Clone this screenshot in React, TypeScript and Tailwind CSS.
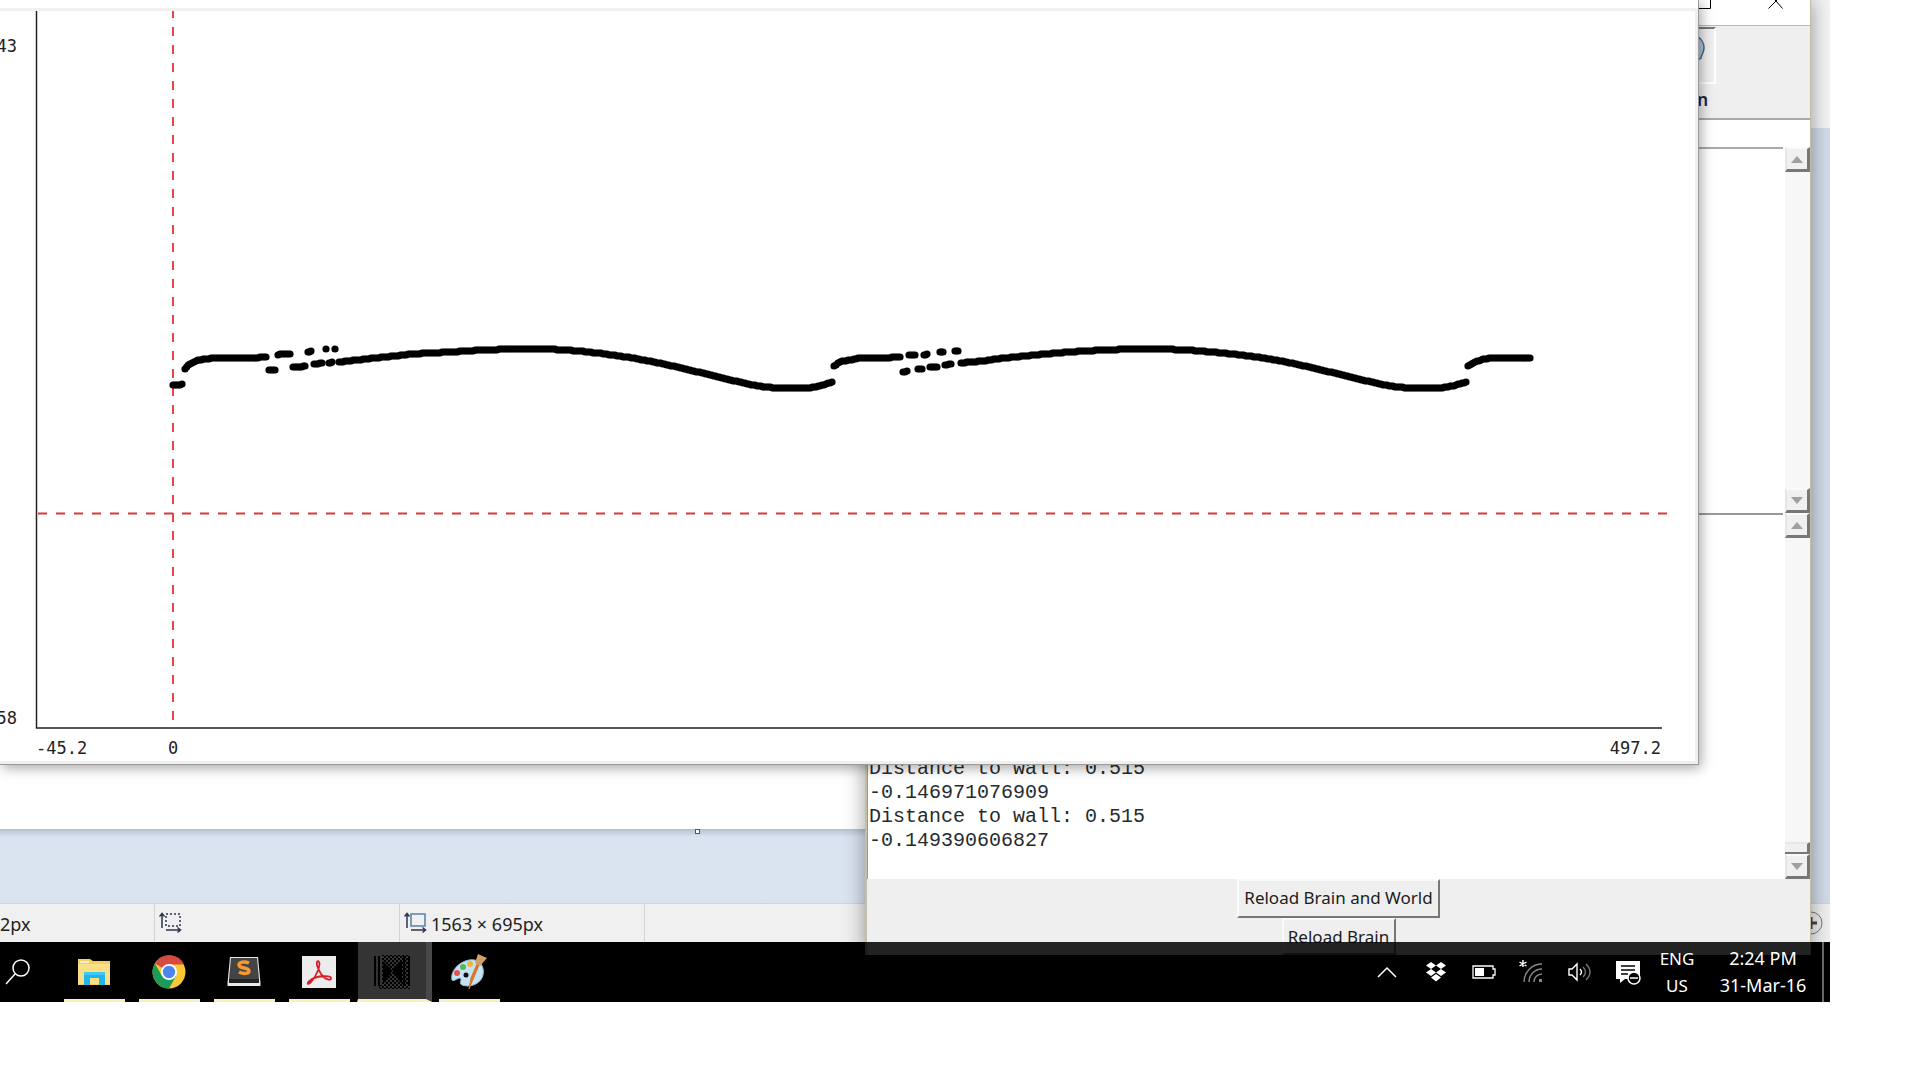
import React from "react";

type Point = [number, number];

const wave: Point[] = [
  [339, 362], [357, 360], [385, 357], [414, 354], [450, 352], [485, 350], [525, 349], [565, 350], [605, 354],
  [649, 361], [698, 372], [735, 381], [759, 386], [780, 388], [805, 388], [820, 386], [832, 382],
];
const secondWave: Point[] = [
  [961, 363], [982, 361], [1005, 358], [1035, 355], [1070, 352], [1105, 350], [1145, 349], [1185, 350], [1232, 354],
  [1281, 361], [1330, 372], [1367, 381], [1391, 386], [1412, 388], [1437, 388], [1452, 386], [1466, 382],
];

const series: Point[][] = [
  [[173, 385], [180, 385], [182, 384]],
  [[185, 369], [190, 364], [196, 361], [205, 359], [217, 358], [258, 358], [260, 357], [266, 357]],
  [[269, 370], [275, 370]],
  [[278, 355], [282, 354], [290, 354]],
  [[293, 367], [300, 367], [305, 366]],
  [[308, 352], [311, 351]],
  [[314, 364], [322, 363]],
  [[329, 363], [332, 362]],
  [[326, 349]],
  [[335, 349]],
  wave,
  [[834, 366], [840, 362], [850, 360], [862, 358], [890, 358], [892, 357], [900, 357]],
  [[909, 355], [915, 355]],
  [[924, 355], [927, 354]],
  [[940, 352], [943, 352]],
  [[955, 351], [958, 351]],
  [[903, 372], [907, 371]],
  [[918, 369], [922, 369]],
  [[930, 367], [937, 367]],
  [[945, 365], [951, 364]],
  secondWave,
  [[1468, 366], [1475, 362], [1485, 359], [1495, 358], [1530, 358]],
];

function sample(points: Point[]): Point[] {
  const out: Point[] = [points[0]];
  for (let i = 1; i < points.length; i++) {
    const [x0, y0] = points[i - 1];
    const [x1, y1] = points[i];
    const before = points[i - 2] ?? points[i - 1];
    const after = points[i + 1] ?? points[i];
    const m0 = ((y1 - before[1]) / (x1 - before[0])) * (x1 - x0);
    const m1 = ((after[1] - y0) / (after[0] - x0)) * (x1 - x0);
    const n = Math.max(1, Math.ceil((x1 - x0) / 2));
    for (let k = 1; k <= n; k++) {
      const t = k / n;
      const t2 = t * t;
      const t3 = t2 * t;
      const y = (2 * t3 - 3 * t2 + 1) * y0 + (t3 - 2 * t2 + t) * m0 + (3 * t2 - 2 * t3) * y1 + (t3 - t2) * m1;
      out.push([x0 + (x1 - x0) * t, y]);
    }
  }
  return out;
}

const dots = series.flatMap(sample);

function Plot() {
  return (
    <svg viewBox="35 11 1660 719" preserveAspectRatio="xMinYMin meet" className="block w-full" role="img" aria-label="Distance plot">
      <path d="M36.5 11V728H1662" fill="none" stroke="#222" strokeWidth="1.5" />
      <path d="M173 9V724" stroke="#ea3034" strokeWidth="1.8" strokeDasharray="9 9" />
      <path d="M38 513.500H1667" stroke="#d8383e" strokeWidth="1.8" strokeDasharray="9 9" />
      {dots.map(([x, y], i) => (
        <circle key={i} cx={x} cy={Math.round(y)} r="3.6" />
      ))}
    </svg>
  );
}

function PlotWindow() {
  return (
    <section className="absolute top-0 right-[131px] bottom-[237px] left-0 flex flex-col border-r border-b border-[#999] bg-white shadow-[2px_3px_12px_rgba(0,0,0,0.35)]">
      <div className="h-2 shrink-0 bg-white" />
      <div className="flex flex-1 flex-col overflow-hidden border-t-3 border-r-3 border-b-3 border-[#f0f0f0] font-['DejaVu_Sans_Mono',monospace] text-[17px] leading-5 text-[#222]">
        <div className="flex">
          <div className="flex w-[35px] shrink-0 flex-col justify-between pt-[25px] pr-[18px] pb-0.5">
            <span className="self-end">43</span>
            <span className="self-end">58</span>
          </div>
          <div className="min-w-0 flex-1"><Plot /></div>
        </div>
        <div className="flex pt-2 pr-[34px] pl-9">
          <span className="w-[132px]">-45.2</span>
          <span>0</span>
          <span className="ml-auto">497.2</span>
        </div>
      </div>
    </section>
  );
}

function ArrowButton({ down = false }: { down?: boolean }) {
  return (
    <button aria-label={down ? "Scroll down" : "Scroll up"} className="flex h-[25px] w-full shrink-0 items-center justify-center border-t-2 border-r-3 border-b-3 border-l-2 border-t-[#fafafa] border-r-[#777] border-b-[#777] border-l-[#e6e6e6] bg-[#f0f0f0]">
      <svg width="12" height="7" viewBox="0 0 12 7">
        <path d={down ? "M0 0H12L6 7Z" : "M0 7H12L6 0Z"} fill="#a0a0a0" />
      </svg>
    </button>
  );
}

function ScrollBar({ thumb = false }: { thumb?: boolean }) {
  return (
    <div className="flex w-[25px] shrink-0 flex-col justify-between bg-[#f7f7f7]">
      <ArrowButton />
      <div>
        {thumb && <div className="h-3 border-t-2 border-r-3 border-b-2 border-[#777] border-t-[#e8e8e8] bg-[#f0f0f0]" />}
        <ArrowButton down />
      </div>
    </div>
  );
}

function ConsoleWindow() {
  return (
    <section className="absolute top-0 right-[19px] bottom-[47px] left-[865px] flex flex-col border-r border-l-2 border-[#c4bfa0] bg-white shadow-[0_0_20px_rgba(0,0,0,0.4)]">
      <div className="flex h-[26px] shrink-0 items-start justify-end gap-[57px] border-b border-[#b8b8b8] pr-[27px]">
        <button aria-label="Maximize"><svg width="15" height="9" viewBox="0 0 15 9"><path d="M.5 0V8.500H14.500V0" fill="none" stroke="#000" /></svg></button>
        <button aria-label="Close"><svg width="15" height="9" viewBox="0 0 15 9"><path d="M.5 8.500L8 1L14.500 8.500M6 -1L8 1L10 -1" fill="none" stroke="#000" /></svg></button>
      </div>
      <div className="flex h-[94px] shrink-0 justify-end border-b-2 border-[#a8a8a8] bg-[#efefef] pt-px pr-[94px]">
        <div className="flex flex-col items-center">
          <button aria-label="Brain" className="flex h-[57px] w-[56px] items-start justify-center border-t-2 border-r-2 border-b-2 border-t-[#777] border-r-white border-b-white bg-[#efefef] pt-[7px]">
            <svg width="36" height="30" viewBox="0 0 36 30">
              <path d="M18 1H29C33 3 35 8 35 12C35 17 32 19 32 22L29 24V29H18Z" fill="#a9c3de" stroke="#556680" strokeWidth="1.500" />
            </svg>
          </button>
          <span className="mt-1 self-end pr-2 font-['Noto_Sans',sans-serif] text-[17px] leading-6 font-semibold text-[#223]">n</span>
        </div>
      </div>
      <div className="h-[27px] shrink-0 bg-white" />
      <div className="flex min-h-0 flex-1">
        <div className="mr-0.5 flex-1 border-t-2 border-[#aaa] bg-white" />
        <ScrollBar />
      </div>
      <div className="flex min-h-0 flex-1">
        <div className="mr-0.5 flex flex-1 flex-col justify-end overflow-hidden border-t-2 border-l border-[#999] bg-white pb-[26px] pl-px">
          <pre className="font-['Liberation_Mono','Courier_New',monospace] text-[20px] leading-6 text-[#2a2a2a]">
            {"Distance to wall: 0.515\n-0.146971076909\nDistance to wall: 0.515\n-0.149390606827"}
          </pre>
        </div>
        <ScrollBar thumb />
      </div>
      <div className="flex h-[76px] shrink-0 flex-col items-center bg-[#efefef] font-['Noto_Sans','Segoe_UI',sans-serif] text-[17px] text-[#1c1c1c]">
        <button className="h-[39px] w-[203px] border-2 border-t-[#fafafa] border-r-[#777] border-b-[#777] border-l-[#fafafa] pb-0.5 whitespace-nowrap">Reload Brain and World</button>
        <button className="h-[37px] w-[114px] border-2 border-t-[#fafafa] border-r-[#777] border-b-[#777] border-l-[#fafafa] whitespace-nowrap">Reload Brain</button>
      </div>
    </section>
  );
}

function SizeIcon({ dashed = false }: { dashed?: boolean }) {
  return (
    <svg width="23" height="23" viewBox="0 0 23 23" fill="none" stroke="#2c3350" strokeWidth="1.500">
      <path d="M3 16V2M0.500 4.500L3 1.500L5.500 4.500M7 18H21M18.500 15.500L21.500 18L18.500 20.500" />
      <rect x="7" y="2" width="14" height="12" strokeDasharray={dashed ? "2 2" : undefined} stroke={dashed ? "#2c3350" : "#5580a5"} />
    </svg>
  );
}

function PaintWindow() {
  return (
    <section className="absolute inset-x-0 top-0 bottom-[60px] flex flex-col bg-[#dae4f0]">
      <div className="h-32 shrink-0 bg-[#f2f3f4]" />
      <div className="relative flex flex-1 flex-col bg-[#d0dae9]">
        <div className="h-[701px] bg-white" />
        <div className="flex-1 bg-linear-to-b from-[#b4c0d2] to-[#dae4f0] to-[8px]" />
        <div className="absolute top-[701px] left-[695px] size-[5px] border border-[#555] bg-white" />
        <div className="absolute inset-y-0 right-0 w-[19px] bg-[#d3dcea]" />
      </div>
      <footer className="flex h-[39px] shrink-0 items-center border-t border-[#d0d4da] bg-[#f0f0f0] font-['Noto_Sans','Segoe_UI',sans-serif] text-[18px] leading-6 text-[#222]">
        <div className="flex h-full w-[155px] items-center border-r border-[#d4d4d4] pt-0.5">2px</div>
        <div className="flex h-full w-[245px] items-center border-r border-[#d4d4d4] pl-1"><SizeIcon dashed /></div>
        <div className="flex h-full w-[245px] items-center gap-1 border-r border-[#d4d4d4] pl-1"><SizeIcon /><span className="pt-0.5">1563 × 695px</span></div>
        <button aria-label="Zoom in" className="mr-[7px] ml-auto">
          <svg width="24" height="24" viewBox="0 0 24 24"><circle cx="12" cy="12" r="11" fill="#eee" stroke="#777" /><path d="M6 12H18M12 6V18" stroke="#444" strokeWidth="3" /></svg>
        </button>
      </footer>
    </section>
  );
}

const Folder = () => (
  <svg width="34" height="34" viewBox="0 0 34 34">
    <path d="M1 4H13L16 6H33V30H1Z" fill="#f5cf63" /><path d="M3 6H12V8H3Z" fill="#fff3c8" /><path d="M1 9H33V29H1Z" fill="#fbdf87" />
    <path d="M7 17H28V30H22V23H13V30H7Z" fill="#22b5ea" /><path d="M7 17H28V20H7Z" fill="#3fc9f5" />
  </svg>
);
const Chrome = () => (
  <svg width="34" height="34" viewBox="0 0 34 34">
    <circle cx="17" cy="17" r="16.500" fill="#fcc934" />
    <path d="M17 17L3 8.500A16.500 16.500 0 0 1 32 9.500H17Z" fill="#d64b3f" />
    <path d="M3 8.500A16.500 16.500 0 0 0 17 33.500L24 21L17 17L10 21Z" fill="#1b9b59" />
    <circle cx="17" cy="17" r="8" fill="#fff" /><circle cx="17" cy="17" r="6.200" fill="#4a86ee" />
  </svg>
);
const Sublime = () => (
  <svg width="34" height="34" viewBox="0 0 34 34">
    <path d="M3 2H31L33.500 28V31H.5V28Z" fill="#e8e8e8" /><path d="M4 3H30L32 24V28H2V24Z" fill="#444" /><path d="M2 24H32V28H2Z" fill="#222" />
    <path d="M22 8C17 6 12 7 12 10C12 14 22 12 22 16C22 19 16 19 12 17" fill="none" stroke="#f59a32" strokeWidth="3.500" />
  </svg>
);
const Acrobat = () => (
  <svg width="34" height="34" viewBox="0 0 34 34">
    <path d="M0 1H34V33H0Z" fill="#ececec" />
    <path d="M16 6C13 7 16 14 19 19C23 25 30 26 29 23C28 20 15 21 10 24C4 28 5 31 9 27C14 22 19 10 17 7Z" fill="none" stroke="#d51f28" strokeWidth="1.800" />
  </svg>
);
const Film = () => (
  <svg width="36" height="36" viewBox="0 0 36 36">
    <defs><pattern id="check" width="4" height="4" patternUnits="userSpaceOnUse"><path d="M0 0H2V2H0ZM2 2H4V4H2Z" fill="#000" /></pattern></defs>
    <path d="M8 1H36V35H5V31H8Z" fill="url(#check)" />
    <path d="M0 2H2V32H0ZM4 2H6V32H4ZM9 7L17 15V19L9 30ZM28 7L19 15V19L28 30ZM29 2H31V32H29ZM34 2H36V32H34Z" fill="#000" />
  </svg>
);
const Palette = () => (
  <svg width="36" height="36" viewBox="0 0 36 36">
    <path d="M18 6C28 4 34 12 32 21C30 30 19 34 11 31C7 29 12 26 9 24C6 24 3 28 1 26C-1 18 7 8 18 6Z" fill="#c5e3f2" stroke="#8dbdd8" />
    <circle cx="15" cy="21" r="2.500" fill="#111" /><circle cx="6" cy="19" r="3" fill="#e0534f" /><circle cx="12" cy="13" r="3" fill="#54b85b" /><circle cx="19" cy="10" r="3" fill="#efb53a" />
    <path d="M28 11L18 35L20 24L26 10Z" fill="#d9762b" stroke="#d9762b" /><path d="M24 9L27 0L36 4L29 12Z" fill="#cfa06c" />
  </svg>
);

const apps = [
  { name: "File Explorer", icon: <Folder /> },
  { name: "Chrome", icon: <Chrome /> },
  { name: "Sublime Text", icon: <Sublime /> },
  { name: "Acrobat Reader", icon: <Acrobat /> },
  { name: "Plot", icon: <Film />, active: true },
  { name: "Paint", icon: <Palette /> },
];

function Tray() {
  return (
    <div className="ml-auto flex h-full items-center pl-2 text-white">
      <button aria-label="Show hidden icons" className="mr-[28px]"><svg width="20" height="12" viewBox="0 0 20 12" fill="none" stroke="#fff" strokeWidth="1.500"><path d="M1 11L10 2L19 11" /></svg></button>
      <button aria-label="Dropbox" className="mr-[25px]"><svg width="22" height="22" viewBox="0 0 22 22" fill="#fff"><path d="M6 1L11 4.500L6 8L1 4.500ZM16 1L21 4.500L16 8L11 4.500ZM6 8L11 11.500L6 15L1 11.500ZM16 8L21 11.500L16 15L11 11.500ZM11 13L16 16.500L11 20.500L6 16.500Z" /></svg></button>
      <button aria-label="Battery" className="mr-[23px]"><svg width="24" height="14" viewBox="0 0 24 14"><path d="M1 1H21V4H23V10H21V13H1Z" fill="none" stroke="#fff" strokeWidth="1.300" /><path d="M3 3H12V11H3Z" fill="#fff" /></svg></button>
      <button aria-label="Network" className="mr-[25px]">
        <svg width="24" height="24" viewBox="0 0 24 24" fill="none" stroke="#888" strokeWidth="1.400">
          <path d="M5 22A18 18 0 0 1 23 4M10 22A13 13 0 0 1 23 9M15 22A8 8 0 0 1 23 14" /><path d="M20 19H23V22H20Z" fill="#888" stroke="none" /><path d="M4 0V7M.5 2L7.500 6M7.500 2L.5 6" stroke="#fff" />
        </svg>
      </button>
      <button aria-label="Volume" className="mr-[24px]"><svg width="24" height="20" viewBox="0 0 24 20" fill="none" stroke="#fff" strokeWidth="1.400"><path d="M1 7H4L9 2V18L4 13H1ZM12 7Q15 10 12 13" /><path d="M15 5Q20 10 15 15M18 2Q26 10 18 18" stroke="#777" /></svg></button>
      <button aria-label="Notifications" className="mr-[18px]"><svg width="25" height="25" viewBox="0 0 25 25"><path d="M0 1H24V19H9L4 23V19H0Z" fill="#fff" /><path d="M5 6H19M5 10H19M5 14H12" stroke="#000" strokeWidth="1.500" /><circle cx="18" cy="18" r="6" fill="#000" stroke="#fff" strokeWidth="1.500" /><path d="M14 18H22" stroke="#fff" strokeWidth="1.500" /></svg></button>
      <button className="mr-[22px] w-9 text-center leading-[27px] whitespace-nowrap"><span className="block">ENG</span><span className="block">US</span></button>
      <button className="mr-[13px] w-[92px] text-center text-[18px] leading-[27px] whitespace-nowrap"><span className="block">2:24 PM</span><span className="block">31-Mar-16</span></button>
      <div className="h-full w-2 border-l-2 border-[#666]" />
    </div>
  );
}

function Taskbar() {
  return (
    <nav className="absolute inset-x-0 bottom-0 flex h-[60px] items-center bg-black/86 font-['Noto_Sans','Segoe_UI',sans-serif] text-[17px]">
      <button aria-label="Search" className="mr-[26px] flex w-[31px] justify-end">
        <svg width="26" height="26" viewBox="0 0 26 26" fill="none" stroke="#fff" strokeWidth="1.500"><circle cx="16" cy="9" r="8" /><path d="M10 15L1 25" /></svg>
      </button>
      {apps.map((a) => (
        <button
          key={a.name}
          aria-label={a.name}
          className={a.active
            ? "flex h-full w-[75px] shrink-0 items-center justify-center border-r-[6px] border-b-3 border-l border-r-[#484848] border-b-[#f8f0bd] border-l-black bg-[#343434] pt-0.5"
            : "mx-[7px] flex h-full w-[61px] shrink-0 items-center justify-center border-b-3 border-[#f8f0bd] pt-0.5 pr-0.5"}
        >
          {a.icon}
        </button>
      ))}
      <Tray />
    </nav>
  );
}

export default function App() {
  return (
    <div className="h-screen bg-white pr-[90px] pb-[78px]">
      <main className="relative h-full overflow-hidden bg-black">
        <PaintWindow />
        <ConsoleWindow />
        <PlotWindow />
        <Taskbar />
      </main>
    </div>
  );
}
